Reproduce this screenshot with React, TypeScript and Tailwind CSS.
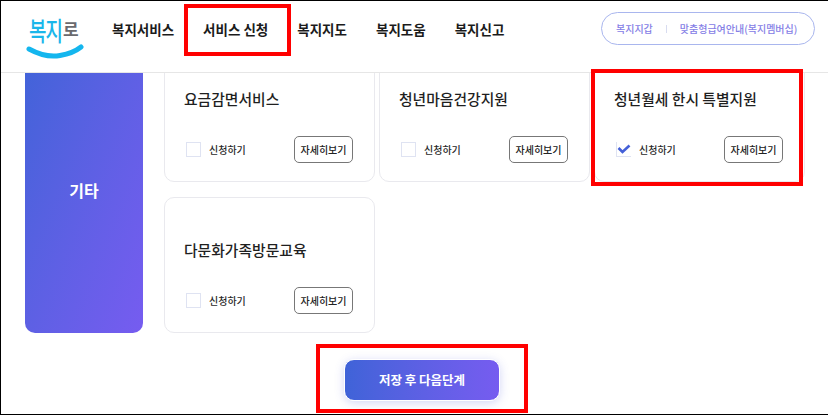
import clsx from "clsx";

const navItems = ["복지서비스", "서비스 신청", "복지지도", "복지도움", "복지신고"];

const Logo = () => {
  return (
    <div className="relative h-[56px] w-[62px]">
      <div className="flex items-start pl-[3px] pt-[3px] text-[19px] leading-[28px] font-medium tracking-[-1px]">
        <span className="origin-top scale-y-[1.4] text-[#1ab6ea]">복지</span>
        <span className="ml-[1px] mt-[5px] text-[17px] font-bold text-[#6a6a6e]">로</span>
      </div>
      <svg
        className="absolute left-0 top-[36px]"
        width="60"
        height="20"
        viewBox="0 0 60 20"
        fill="none"
      >
        <path
          d="M3 6C14 12 26 14 34 12.5C43 11 50 8 55 4"
          stroke="#14b6ee"
          strokeWidth="5"
          strokeLinecap="round"
        />
      </svg>
    </div>
  );
};

const Header = () => {
  return (
    <div className="flex h-[72px] shrink-0 items-start border-b border-[#e6e6e6] bg-white pl-[25px]">
      <div className="mt-[6px] w-[86px] shrink-0">
        <Logo />
      </div>
      <nav className="mt-[18px] flex gap-[29px] text-[13.5px] leading-[20px] font-semibold whitespace-nowrap text-[#1b1b1b]">
        {navItems.map((item) => (
          <div key={item}>{item}</div>
        ))}
      </nav>
      <div className="mt-[11px] ml-auto mr-[13px] flex h-[33px] w-[214px] items-center rounded-full border border-[#a9b6ee] pl-[14px] text-[10px] font-medium whitespace-nowrap text-[#8580e6]">
        <span>복지지갑</span>
        <span className="mx-[13px] h-[8px] w-px bg-[#d8dcf0]" />
        <span>맞춤형급여안내(복지멤버십)</span>
      </div>
    </div>
  );
};

const ServiceCard: React.FC<{ title: string; checked?: boolean }> = ({
  title,
  checked,
}) => {
  return (
    <div className="flex h-[136px] flex-col rounded-[10px] border border-[#e9e9ee] bg-white pl-[21px] pr-[21px] pt-[40px]">
      <div className="-ml-[2px] text-[14.8px] leading-[24px] font-medium whitespace-nowrap text-[#1f1f1f]">
        {title}
      </div>
      <div className="mt-[25px] flex items-center justify-between">
        <div className="flex items-center gap-[8px]">
          <div
            className={clsx(
              "relative size-[15px] border-[#dfe3f2] bg-white",
              checked ? "border-b border-l" : "border",
            )}
          >
            {checked && (
              <svg
                className="absolute left-0 top-[2px]"
                width="14"
                height="10"
                viewBox="0 0 14 10"
                fill="none"
              >
                <path
                  d="M1.5 4L5.5 8L12.5 1.5"
                  stroke="#4460d8"
                  strokeWidth="2.6"
                />
              </svg>
            )}
          </div>
          <span className="text-[10px] font-medium text-[#2a2a2a]">신청하기</span>
        </div>
        <button className="h-[27px] w-[59px] rounded-[5px] border border-[#777] bg-white text-[10px] font-medium whitespace-nowrap text-[#222]">
          자세히보기
        </button>
      </div>
    </div>
  );
};

const App = () => {
  return (
    <div
      className="relative flex h-[415px] w-[828px] flex-col overflow-hidden border-y border-l border-black bg-white"
      style={{ fontFamily: '"Noto Sans CJK KR", "Noto Sans", sans-serif' }}
    >
      <Header />
      <div className="h-0 grow overflow-hidden">
        <div className="-mt-[27px] flex gap-[21px] pl-[24px]">
          <div className="flex h-[287px] w-[118px] shrink-0 items-center justify-center rounded-[10px] bg-gradient-to-br from-[#3f63d8] to-[#765cf0] text-[16px] font-bold text-white">
            기타
          </div>
          <div className="grid grid-cols-[211px_211px_211px] gap-x-[4px] gap-y-[15px]">
            <ServiceCard title="요금감면서비스" />
            <ServiceCard title="청년마음건강지원" />
            <ServiceCard title="청년월세 한시 특별지원" checked />
            <ServiceCard title="다문화가족방문교육" />
          </div>
        </div>
        <div className="mt-[26px] flex pl-[343px]">
          <button className="h-[42px] w-[156px] rounded-[10px] border border-white bg-gradient-to-r from-[#3f63d8] to-[#765cf0] text-[12.5px] font-bold text-white shadow-[0_2px_10px_rgba(80,90,220,0.25)]">
            저장 후 다음단계
          </button>
        </div>
      </div>
      <div className="absolute left-[183px] top-[3px] h-[52px] w-[107px] border-[4px] border-[#ff0000]" />
      <div className="absolute left-[590px] top-[68px] h-[117px] w-[212px] border-[4px] border-[#ff0000]" />
      <div className="absolute left-[315px] top-[343px] h-[69px] w-[212px] border-[4px] border-[#ff0000]" />
    </div>
  );
};

export default App;
